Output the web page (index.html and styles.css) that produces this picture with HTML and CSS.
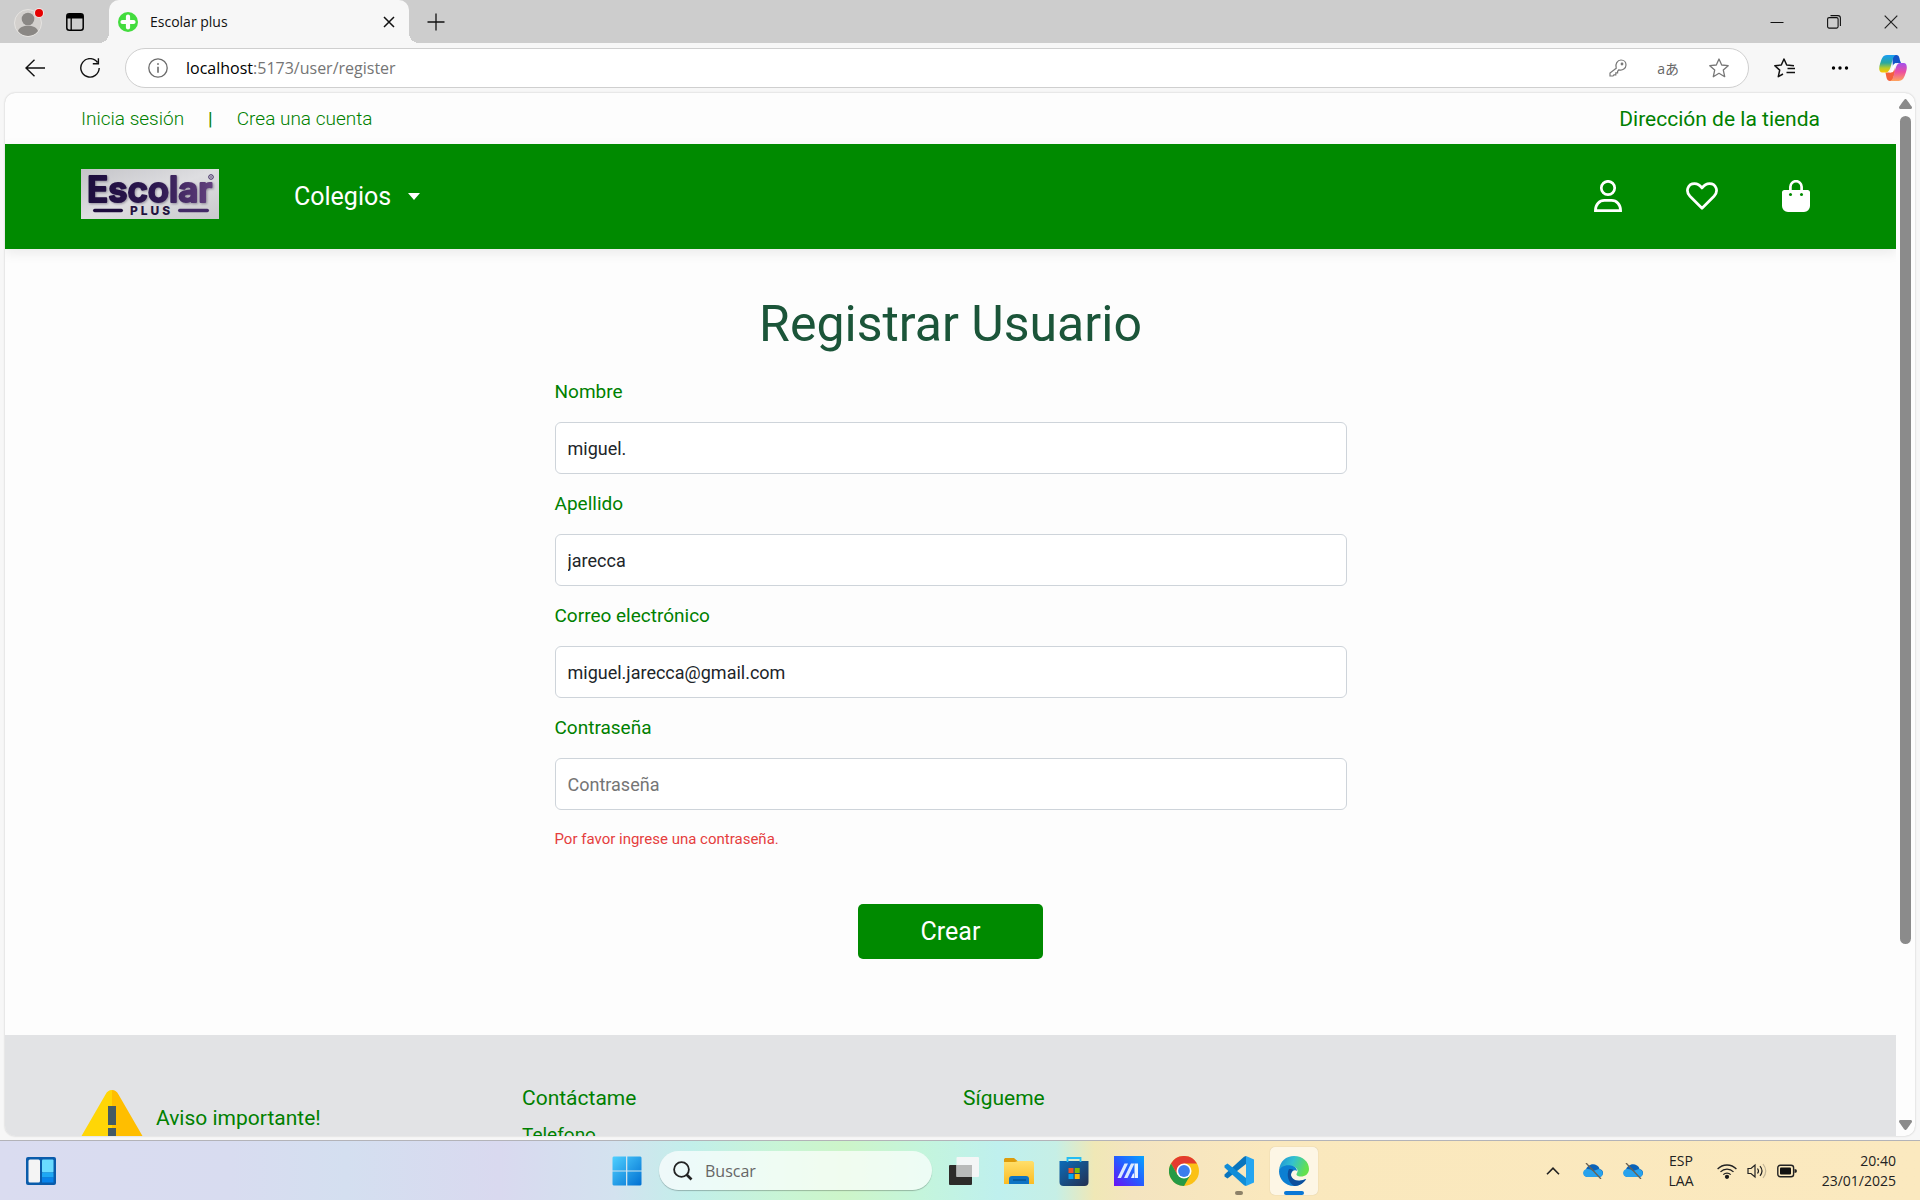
FILE: index.html
```html
<!DOCTYPE html>
<html lang="es">
<head>
<meta charset="utf-8">
<meta name="viewport" content="width=device-width, initial-scale=1">
<title>Escolar plus</title>
<link rel="stylesheet" href="styles.css">
</head>
<body>
<div class="browser">
  <div class="tabstrip">
    <div class="tab-tools">
      <button class="icon-btn" aria-label="Perfil">
        <svg width="32" height="32" viewBox="0 0 32 32"><circle cx="15" cy="17" r="13.5" fill="#d3d0cd" stroke="#e6e4e1"/><circle cx="15" cy="13" r="6.3" fill="#8a8784"/><path d="M5 25c2-7 18-7 20 0-5 6.500-15 6.500-20 0z" fill="#8a8784"/><circle cx="26" cy="7" r="5" fill="#f4e4e4"/><circle cx="26" cy="7" r="4" fill="#e60000"/></svg>
      </button>
      <button class="icon-btn" aria-label="Menú de pestañas">
        <svg width="18" height="18" viewBox="0 0 18 18"><rect x=".8" y=".8" width="16.400" height="16.400" rx="2.500" fill="none" stroke="#000" stroke-width="1.500"/><path d="M1 3a2 2 0 0 1 2-2h12a2 2 0 0 1 2 2v2.500H1z"/><path d="M5.200 5v12" stroke="#000" stroke-width="1.300"/></svg>
      </button>
    </div>
    <div class="tab">
      <svg width="20" height="20" viewBox="0 0 20 20"><circle cx="10" cy="10" r="10" fill="#43dc3e"/><path d="M10 4.500v11M4.500 10h11" stroke="#fff" stroke-width="4.200" stroke-linecap="round"/></svg>
      <span class="tab-title">Escolar plus</span>
      <button class="icon-btn" aria-label="Cerrar pestaña"><svg width="12" height="12" viewBox="0 0 12 12"><path d="M1 1l10 10M11 1L1 11" stroke="#111" stroke-width="1.500"/></svg></button>
    </div>
    <button class="icon-btn new-tab" aria-label="Nueva pestaña"><svg width="18" height="18" viewBox="0 0 18 18"><path d="M9 .5v17M.5 9h17" stroke="#111" stroke-width="1.300"/></svg></button>
    <div class="window-controls">
      <button class="icon-btn" aria-label="Minimizar"><svg width="14" height="14" viewBox="0 0 14 14"><path d="M.5 7.500h13" stroke="#111"/></svg></button>
      <button class="icon-btn" aria-label="Restaurar"><svg width="14" height="14" viewBox="0 0 14 14" fill="none" stroke="#111" stroke-width="1.100"><rect x=".6" y="2.600" width="10.500" height="10.500" rx="1.500"/><path d="M3.500 .6h7.500a2.400 2.400 0 0 1 2.400 2.400v8"/></svg></button>
      <button class="icon-btn" aria-label="Cerrar"><svg width="14" height="14" viewBox="0 0 14 14"><path d="M.7 .7l12.600 12.600M13.300 .7L.7 13.300" stroke="#222" stroke-width="1.200"/></svg></button>
    </div>
  </div>

  <div class="toolbar">
    <button class="icon-btn" aria-label="Atrás"><svg width="20" height="18" viewBox="0 0 20 18" fill="none" stroke="#111" stroke-width="1.400"><path d="M20 9H1M9.500 .7L1 9l8.500 8.300"/></svg></button>
    <button class="icon-btn" aria-label="Actualizar"><svg width="20" height="20" viewBox="0 0 20 20" fill="none" stroke="#111" stroke-width="1.400"><path d="M17.500 4.500A9.200 9.200 0 1 0 19.200 10M18.400 .3v5.400h-5.600"/></svg></button>
    <div class="address">
      <svg width="20" height="20" viewBox="0 0 20 20" fill="none" stroke="#6b6b6b" stroke-width="1.300"><circle cx="10" cy="10" r="9.200"/><path d="M10 8.700v6" stroke-width="1.600"/><circle cx="10" cy="6" r=".6" fill="#6b6b6b" stroke-width=".8"/></svg>
      <span class="url"><span class="host">localhost</span>:5173/user/register</span>
      <svg width="18" height="18" viewBox="0 0 18 18" fill="none" stroke="#777" stroke-width="1.200"><path d="M7.200 9.200C5.800 5.200 8.500 1 12 1c3 0 5 2.300 5 5 0 3.500-3.500 5.800-7 4.800L8.600 12.300v1.500H6.800v2H4.900L4 17H1v-3z"/><circle cx="13" cy="5" r=".8" fill="#777"/></svg>
      <span class="translate">aあ</span>
      <svg width="20" height="20" viewBox="0 0 20 20" fill="none" stroke="#777" stroke-width="1.300" stroke-linejoin="round"><path d="M10 1l2.700 6 6.500.700-4.900 4.400 1.400 6.600L10 15.300l-5.700 3.400 1.400-6.600L.8 7.700 7.300 7z"/></svg>
    </div>
    <button class="icon-btn" aria-label="Favoritos"><svg width="22" height="20" viewBox="0 0 22 20" fill="none" stroke="#111" stroke-width="1.500" stroke-linejoin="round"><path d="M20 7.700L12.700 7 10 1 7.300 7 .8 7.700l4.900 4.400-1.400 6.600L9 16M13.500 10.500H21M12.500 14.500H21"/></svg></button>
    <button class="icon-btn" aria-label="Configuración y más"><svg width="18" height="6" viewBox="0 0 18 6"><circle cx="2.500" cy="3" r="1.700"/><circle cx="9" cy="3" r="1.700"/><circle cx="15.500" cy="3" r="1.700"/></svg></button>
    <button class="icon-btn" aria-label="Copilot">
      <svg width="28" height="26" viewBox="0 0 28 26">
        <defs>
          <linearGradient id="cpA" x1="0" y1="0" x2="0" y2="1"><stop offset="0" stop-color="#1a9df5"/><stop offset=".45" stop-color="#28a8a0"/><stop offset=".75" stop-color="#b8cc28"/><stop offset="1" stop-color="#ffc400"/></linearGradient>
          <linearGradient id="cpB" x1="0" y1="0" x2="0" y2="1"><stop offset="0" stop-color="#a250ee"/><stop offset=".5" stop-color="#ec4fa0"/><stop offset="1" stop-color="#ffa45c"/></linearGradient>
        </defs>
        <path d="M13 0h4.500c2.500 0 3 3 3.500 5.500l1 2.500h-4c-2 0-3 1-4 4z" fill="#1454c8"/>
        <path d="M6.500 17.500h5L15 12l1 5-2 7c-.5 1.500-1.500 2-3 2-3.500 0-3.500-4-4.500-8.500z" fill="#f4603c"/>
        <path d="M8 0h9c-3 1-3.500 5-4.500 9S10 17.500 7 17.500H3.500C-.8 17.500 0 12 1 9 2.500 4 3.500 0 8 0z" fill="url(#cpA)"/>
        <path d="M21 8h3.500c4.300 0 3.500 6 2.500 9-1.500 5-3 9-7.500 9H11c3-1 3.500-5 4.500-9S18 8 21 8z" fill="url(#cpB)"/>
        <path d="M14.500 9.500q1-1.500 3-1.500-1.500 2-2.500 7-.5 2.500-3 2.500H10q1.500-.5 2.500-3z" fill="#fff"/>
      </svg>
    </button>
  </div>

  <div class="viewport">
    <div class="page">
      <div class="topbar">
        <nav class="account"><a href="#login">Inicia sesión</a><span class="divider">|</span><a href="#register">Crea una cuenta</a></nav>
        <a class="store" href="#tienda">Dirección de la tienda</a>
      </div>
      <header class="navbar">
        <a href="#inicio" class="logo" aria-label="Escolar Plus">
          <svg width="138" height="50" viewBox="0 0 138 50">
            <defs>
              <linearGradient id="lgBg" x1="0" y1="0" x2="1" y2="1"><stop offset="0" stop-color="#c4c4c8"/><stop offset=".5" stop-color="#dedee1"/><stop offset="1" stop-color="#c9c9cc"/></linearGradient>
              <linearGradient id="lgInk" gradientUnits="userSpaceOnUse" x1="0" y1="0" x2="138" y2="0"><stop offset="0" stop-color="#1c0c3c"/><stop offset=".55" stop-color="#2d1850"/><stop offset="1" stop-color="#6a4684"/></linearGradient>
            </defs>
            <rect width="138" height="50" fill="url(#lgBg)"/>
            <text class="logo-name" x="6" y="33" fill="url(#lgInk)" stroke="url(#lgInk)">Escolar</text>
            <text class="logo-plus" x="49" y="46">PLUS</text>
            <rect x="97" y="39.800" width="31" height="3.400" rx="1.700" fill="#432a66"/>
            <rect x="12" y="39.800" width="30" height="3.400" rx="1.700" fill="#1c0c3c"/>
            <circle cx="130" cy="8" r="2.300" fill="none" stroke="#3b2560"/><circle cx="130" cy="8" r=".8" fill="#3b2560"/>
          </svg>
        </a>
        <button class="menu-btn">Colegios<svg width="12" height="7" viewBox="0 0 12 7"><path d="M0 0h12L6 7z" fill="#fff"/></svg></button>
        <nav class="nav-icons">
          <a href="#perfil" aria-label="Mi cuenta"><svg width="32" height="32" viewBox="0 0 32 32" fill="none" stroke="#fff" stroke-width="2.700"><circle cx="16" cy="8" r="6.700"/><path d="M3.400 30.600h25.200c0-6-4-10.200-9-10.200h-7.200c-5 0-9 4.200-9 10.200z"/></svg></a>
          <a href="#favoritos" aria-label="Favoritos"><svg width="32" height="32" viewBox="0 0 32 32" fill="none" stroke="#fff" stroke-width="2.700" stroke-linejoin="round"><path d="M16 28.300L4 16.300C-1 11 2 3.600 8.500 3.600c3.500 0 5.500 1.600 7.500 4.400 2-2.800 4-4.400 7.500-4.400C30 3.600 33 11 28 16.300z"/></svg></a>
          <a href="#carrito" aria-label="Carrito"><svg width="32" height="32" viewBox="0 0 32 32"><path d="M10.400 12V6.800a5.600 5.600 0 0 1 11.200 0V12" fill="none" stroke="#fff" stroke-width="2.700"/><path d="M4.500 10h23A2.500 2.500 0 0 1 30 12.500V26a6 6 0 0 1-6 6H8a6 6 0 0 1-6-6V12.500A2.500 2.500 0 0 1 4.500 10z" fill="#fff"/><circle cx="10.500" cy="14.500" r="1.500" fill="#008a00"/><circle cx="21.500" cy="14.500" r="1.500" fill="#008a00"/></svg></a>
        </nav>
      </header>
      <main class="main">
        <h1>Registrar Usuario</h1>
        <form class="form">
          <label for="nombre">Nombre</label>
          <input id="nombre" type="text" value="miguel.">
          <label for="apellido">Apellido</label>
          <input id="apellido" type="text" value="jarecca">
          <label for="correo">Correo electrónico</label>
          <input id="correo" type="email" value="miguel.jarecca@gmail.com">
          <label for="clave">Contraseña</label>
          <input id="clave" type="password" placeholder="Contraseña" aria-describedby="clave-error">
          <p class="error" id="clave-error">Por favor ingrese una contraseña.</p>
          <button class="submit" type="button">Crear</button>
        </form>
      </main>
      <footer class="footer">
        <section class="notice">
          <svg width="62" height="56" viewBox="0 0 62 56"><path d="M31 0c-3 0-5 1.500-6.500 4.500L.5 46C-2 51 1 56 5 56h26z" fill="#ffd606"/><path d="M31 0c3 0 5 1.500 6.500 4.500l24 41.500c2.500 5-.5 10-4.500 10H31z" fill="#ffbe00"/><path d="M27 16h8v19h-8zM27 38h8v9h-8z" fill="#455a64"/></svg>
          <h2>Aviso importante!</h2>
        </section>
        <section><h2>Contáctame</h2><p>Telefono</p></section>
        <section><h2>Sígueme</h2></section>
      </footer>
    </div>
    <div class="scrollbar">
      <svg width="13" height="10" viewBox="0 0 13 10"><path d="M6.500 0C7.500 0 8 1 13 8c0 1.500-.5 2-1.500 2h-10C.5 10 0 9.500 0 8 5 1 5.500 0 6.500 0z" fill="#8b8b8b"/></svg>
      <div class="track"><div class="thumb"></div></div>
      <svg width="13" height="10" viewBox="0 0 13 10"><path d="M6.500 10C7.500 10 8 9 13 2c0-1.500-.5-2-1.500-2h-10C.5 0 0 .5 0 2c5 7 5.500 8 6.500 8z" fill="#8b8b8b"/></svg>
    </div>
  </div>
</div>

<div class="taskbar">
  <button class="icon-btn widgets" aria-label="Widgets"><svg width="30" height="28" viewBox="0 0 30 28"><rect width="30" height="28" rx="2" fill="#0a5cab"/><rect x="2.500" y="2.500" width="11.500" height="23" rx="1.500" fill="#f4f4f4"/><rect x="16" y="2.500" width="11.500" height="13" rx="1" fill="#69dbff"/><rect x="16" y="15.500" width="11.500" height="5" fill="#1ea8f4"/><rect x="16" y="20.500" width="11.500" height="5" fill="#0883ea"/></svg></button>
  <div class="dock">
    <button class="app" aria-label="Inicio"><svg width="30" height="30" viewBox="0 0 30 30"><defs><linearGradient id="win" x1="0" y1="0" x2="1" y2="1"><stop offset="0" stop-color="#4fd0ff"/><stop offset="1" stop-color="#0070d2"/></linearGradient></defs><path d="M1.500 .5H14v14H.5v-13zM15.300 .5h13.200l1 1v13H15.300zM.5 15.500H14v14H1.500l-1-1zM15.300 15.500h14.200v13l-1 1H15.300z" fill="url(#win)"/></svg></button>
    <label class="search"><svg width="20" height="20" viewBox="0 0 20 20" fill="none" stroke="#222"><circle cx="8.500" cy="8.500" r="7.400" stroke-width="1.800"/><path d="M13.500 13.500l5 5" stroke-width="2.600"/></svg><input type="text" placeholder="Buscar" aria-label="Buscar"></label>
    <button class="app" aria-label="Vista de tareas"><svg width="30" height="28" viewBox="0 0 30 28"><rect x="0" y="8" width="23" height="20" rx="1" fill="#2d2b29"/><rect x="7.500" y="0" width="22.500" height="20" rx="1" fill="#f4f6f6"/><path d="M7.500 8H23v12H7.500z" fill="#b9bab9"/></svg></button>
    <button class="app" aria-label="Explorador de archivos"><svg width="30" height="28" viewBox="0 0 30 28"><defs><linearGradient id="fold" x1="0" y1="0" x2="0" y2="1"><stop offset="0" stop-color="#ffdf6b"/><stop offset="1" stop-color="#fcbc22"/></linearGradient></defs><path d="M0 10V2.500C0 1.500 1 1 2 1h8l3.500 3H28v6z" fill="#dd9c0c"/><path d="M0 5h11l3-1h14.500L30 5.500V27H0z" fill="url(#fold)"/><path d="M5 27v-5q0-3 3-3h14q3 0 3 3v5z" fill="#0e74c4"/><path d="M9 23h13" stroke="#06508c" stroke-width="1.300"/></svg></button>
    <button class="app" aria-label="Microsoft Store"><svg width="30" height="30" viewBox="0 0 30 30"><defs><linearGradient id="store" x1="0" y1="0" x2="1" y2="1"><stop offset="0" stop-color="#0b6cba"/><stop offset="1" stop-color="#243050"/></linearGradient></defs><path d="M.5 5h29v21q0 4-4 4h-21q-4 0-4-4z" fill="url(#store)"/><path d="M8.500 6V2h13v4" fill="none" stroke="#24bdf3" stroke-width="1.800"/><path d="M9.500 12h5v5h-5z" fill="#f35325"/><path d="M15.700 12h5v5h-5z" fill="#81bc06"/><path d="M9.500 18h5v5h-5z" fill="#05a6f0"/><path d="M15.700 18h5v5h-5z" fill="#ffba08"/></svg></button>
    <button class="app" aria-label="MyASUS"><svg width="30" height="30" viewBox="0 0 30 30"><defs><linearGradient id="asus" x1="1" y1="0" x2="0" y2="1"><stop offset="0" stop-color="#06a4ff"/><stop offset=".5" stop-color="#265cff"/><stop offset="1" stop-color="#6a10f4"/></linearGradient></defs><path d="M0 0h30v30H0z" fill="url(#asus)"/><path d="M3.500 22l7-14.500h3.500L7 22zM10 22l7-14.500h3.500L13.500 22z" fill="#dbe9ff"/><path d="M20.500 7.500H24V22h-3.500zM17 22l2-4.500h1V22z" fill="#eaf4ff"/></svg></button>
    <button class="app" aria-label="Chrome"><svg width="30" height="30" viewBox="0 0 30 30"><circle cx="15" cy="15" r="15" fill="#fbc116"/><path d="M2 7.500A15 15 0 0 1 28 7.500H15L8.500 18.700z" fill="#e33b2e"/><path d="M2 7.500A15 15 0 0 0 15 30l6.500-11.300H8.500z" fill="#259a46"/><circle cx="15" cy="15" r="7.500" fill="#fff"/><circle cx="15" cy="15" r="5.900" fill="#3b7ded"/></svg></button>
    <button class="app running" aria-label="Visual Studio Code"><svg width="30" height="30" viewBox="0 0 30 30"><path d="M22 8L3.500 22.500.5 20.500v-2L20 .8 22 0z" fill="#0874bd"/><path d="M22 22L3.500 7.500l-3 2v2L20 29.200l2 .8z" fill="#118dd8"/><path d="M22 0L30 3.500v23L22 30z" fill="#25a5f0"/></svg></button>
    <button class="app active" aria-label="Microsoft Edge"><svg width="30" height="30" viewBox="0 0 30 30"><defs><linearGradient id="edA" x1="0" y1="0" x2="1" y2=".3"><stop offset="0" stop-color="#1c8fd8"/><stop offset=".5" stop-color="#34c1cf"/><stop offset="1" stop-color="#63e14e"/></linearGradient></defs><path d="M0 15C.5 5 7.500 0 15 0c9 0 15 6 15 13 0 5-4 7.500-8 7.500-3.500 0-5.500-1.500-4-3.500 2-3-1-7-6-7C6 10 1 13 0 15z" fill="url(#edA)"/><path d="M0 15c1-4 6-6.500 12-5.500 4 .7 6 3 6 5.500-2-2-6 0-6 4 0 5 5 8 15 4-3 4.700-7 7-12 7C6 30 0 23 0 15z" fill="#0c7fd2"/><path d="M10 13c-3 6-.5 14 5.500 17 5-.2 9-2.800 11.800-7C18 27 12 23 12 18.500c0-2 1-3.500 2.500-4.500-1-.8-3-1.200-4.500-1z" fill="#0d4f9c"/></svg></button>
  </div>
  <div class="tray">
    <svg width="14" height="8" viewBox="0 0 14 8"><path d="M1 7.200l6-6 6 6" fill="none" stroke="#222" stroke-width="1.600"/></svg>
    <svg class="cloud-a" width="20" height="16" viewBox="0 0 20 16"><path d="M4 14a4 4 0 0 1-1-7.500C4 3 9-.5 14 2.500c1.500.8 2.300 2 2.500 3.500C22 7 20.500 14 16 14z" fill="#0a62b9"/><path d="M4 14c-3.500 0-5-4-3-6.500C4 5 7 6 10 8l6-2c5 1 5 8 0 8z" fill="#28a2ec"/><path d="M3 0l15 16" stroke="#6b6252" stroke-width="1.300"/></svg>
    <svg class="cloud-b" width="20" height="16" viewBox="0 0 20 16"><path d="M4 14a4 4 0 0 1-1-7.500C4 3 9-.5 14 2.500c1.500.8 2.300 2 2.500 3.500C22 7 20.500 14 16 14z" fill="#0a62b9"/><path d="M4 14c-3.500 0-5-4-3-6.500C4 5 7 6 10 8l6-2c5 1 5 8 0 8z" fill="#28a2ec"/><path d="M3 0l15 16" stroke="#6b6252" stroke-width="1.300"/></svg>
    <div class="lang">ESP<br>LAA</div>
    <div class="status">
      <svg width="20" height="16" viewBox="0 0 20 16" fill="none" stroke="#222" stroke-width="1.300"><path d="M.6 6a13 13 0 0 1 18.800 0M3.500 8.900a9 9 0 0 1 13 0M6.300 11.600a5.200 5.200 0 0 1 7.400 0"/><circle cx="10" cy="13.800" r="1.500" fill="#111"/></svg>
      <svg width="20" height="16" viewBox="0 0 20 16" fill="none" stroke="#222" stroke-width="1.200"><path d="M1 5.500h3L8 2v12l-4-3.500H1zM10.500 5.500q2 2.500 0 5M13 3.200q4 4.800 0 9.600"/><path d="M16 1q5.500 7 0 14" stroke="#c3b698"/></svg>
      <svg width="20" height="14" viewBox="0 0 20 14"><rect x=".8" y="1.300" width="15.800" height="11.400" rx="2.500" fill="none" stroke="#222" stroke-width="1.400"/><rect x="3" y="3.500" width="11" height="7" rx="1" fill="#111"/><path d="M17.500 5q2.500 0 2.500 2t-2.500 2z" fill="#222"/></svg>
    </div>
    <div class="clock">20:40<br>23/01/2025</div>
  </div>
</div>
</body>
</html>
```

FILE: styles.css
```css
* { box-sizing: border-box; }

:root {
  --green: #008a00;
  --ink-green: #008000;
  --ui-font: "Open Sans", "Noto Sans", sans-serif;
}

body {
  margin: 0;
  height: 100vh;
  display: flex;
  flex-direction: column;
  overflow: hidden;
  background: #f7f7f7;
  font-family: Roboto, sans-serif;
}

a { color: inherit; text-decoration: none; }
svg { display: block; flex: none; }
button { font: inherit; border: 0; padding: 0; background: none; color: inherit; }

.icon-btn { display: flex; align-items: center; justify-content: center; flex: none; }

/* Browser window */
.browser {
  flex: 1;
  min-height: 0;
  display: flex;
  flex-direction: column;
  font-family: var(--ui-font);
}

.tabstrip {
  height: 43px;
  flex: none;
  display: flex;
  align-items: center;
  background: #cdcdcd;
}
.tab-tools {
  width: 109px;
  padding-left: 13px;
  display: flex;
  align-items: center;
  gap: 21px;
}
.tab {
  width: 300px;
  height: 43px;
  padding: 0 14px 0 9px;
  display: flex;
  align-items: center;
  gap: 12px;
  background: #f7f7f7;
  border-radius: 10px 10px 0 0;
  position: relative;
}
.tab::before,
.tab::after {
  content: "";
  position: absolute;
  bottom: 0;
  width: 10px;
  height: 10px;
}
.tab::before { left: -10px; background: radial-gradient(circle at 0 0, #cdcdcd 10px, #f7f7f7 10px); }
.tab::after { right: -10px; background: radial-gradient(circle at 100% 0, #cdcdcd 10px, #f7f7f7 10px); }
.tab-title { flex: 1; font-size: 14px; color: #111; }
.new-tab { margin-left: 18px; }
.window-controls { margin-left: auto; padding-right: 1px; display: flex; }
.window-controls .icon-btn { width: 57px; height: 43px; }

.toolbar {
  height: 49px;
  flex: none;
  display: flex;
  align-items: center;
  padding: 0 13px 0 25px;
  gap: 35px;
}
.address {
  flex: 1;
  height: 40px;
  margin-left: -10px;
  padding: 0 19px 0 22px;
  display: flex;
  align-items: center;
  gap: 30px;
  background: #fff;
  border: 1px solid #cfcfcf;
  border-radius: 20px;
}
.url { flex: 1; margin-left: -12px; font-size: 16px; color: #757575; }
.host { color: #000; }
.translate { font-family: "Open Sans", "Noto Sans CJK JP", sans-serif; font-size: 14px; color: #666; }
.address + .icon-btn { margin-left: -10px; }
.toolbar .icon-btn:last-child { margin-left: -5px; }

/* Web page area */
.viewport {
  flex: 1;
  min-height: 0;
  margin: 1px 5px 4px;
  display: flex;
  overflow: hidden;
  background: #fdfdfd;
  border-radius: 10px;
  box-shadow: 0 0 2px #bdbdbd;
}
.page { flex: 1; min-width: 0; overflow: hidden; font-family: Roboto, sans-serif; }

.topbar {
  height: 51px;
  padding: 0 76px;
  display: flex;
  align-items: center;
  justify-content: space-between;
  color: var(--ink-green);
}
.account { display: flex; gap: 24px; font-size: 19px; font-weight: 300; }
.divider { font-weight: 400; }
.store { font-size: 21px; }

.navbar {
  height: 105px;
  padding: 0 84px 0 76px;
  display: flex;
  align-items: center;
  background: var(--green);
  color: #fff;
  box-shadow: 0 4px 12px rgba(0, 0, 0, .08);
}
.logo { padding-bottom: 6px; }
.logo-name {
  font-family: Inter, sans-serif;
  font-size: 35px;
  font-weight: 600;
  stroke-width: 2;
  stroke-linejoin: round;
  filter: drop-shadow(1px 1px 1px rgba(40, 30, 60, .4));
}
.logo-plus { font-family: Inter, sans-serif; font-size: 12px; font-weight: 800; letter-spacing: 3px; fill: #24133f; }
.menu-btn {
  margin-left: 75px;
  display: flex;
  align-items: center;
  gap: 17px;
  font-size: 25px;
}
.nav-icons { margin-left: auto; padding-bottom: 2px; display: flex; gap: 62px; }

.main {
  padding: 45px 0 76px;
  display: flex;
  flex-direction: column;
  align-items: center;
}
h1 { margin: 0; font-size: 50px; font-weight: 400; line-height: 60px; color: #1b5539; }
.form {
  width: 792px;
  max-width: 90%;
  margin-top: 24px;
  display: flex;
  flex-direction: column;
}
.form label { margin-bottom: 17px; font-size: 19px; line-height: 27px; color: var(--ink-green); }
.form input {
  width: 100%;
  height: 52px;
  margin-bottom: 16px;
  padding: 0 12px;
  font: 18px Roboto, sans-serif;
  color: #212529;
  background: #fff;
  border: 1px solid #ced4da;
  border-radius: 6px;
}
.form input::placeholder { color: #757575; }
.error { margin: 0; font-size: 15px; line-height: 26px; color: #e53e3e; }
.submit {
  align-self: center;
  width: 185px;
  height: 55px;
  margin-top: 52px;
  font-size: 25px;
  color: #fff;
  background: var(--green);
  border-radius: 5px;
}

.footer {
  display: grid;
  grid-template-columns: 441px 441px 1fr;
  padding: 48px 76px;
  background: #e2e3e5;
  color: var(--ink-green);
}
.footer h2 { margin: 0; font-size: 21px; font-weight: 400; line-height: 30px; }
.footer p { margin: 8px 0 0; font-size: 19px; line-height: 28px; }
.notice { display: flex; align-items: center; gap: 13px; padding-top: 4px; }

.scrollbar {
  width: 19px;
  padding: 6px 0;
  display: flex;
  flex-direction: column;
  align-items: center;
  gap: 7px;
}
.track { flex: 1; }
.thumb { width: 11px; height: 83%; background: #8b8b8b; border-radius: 6px; }

/* Taskbar */
.taskbar {
  height: 60px;
  flex: none;
  display: grid;
  grid-template-columns: 1fr auto 1fr;
  align-items: center;
  border-top: 1px solid #b3b3b8;
  background: linear-gradient(90deg, #dadcf0 0%, #d8dcf0 12%, #d4dff0 18%, #d9d9ef 26%, #d3e2ef 32%, #c2efea 36%, #c9f5d4 41%, #cdf5c9 44%, #c4f5dc 48%, #bff0ee 52%, #c6efe6 55%, #f0e8b6 57%, #f4e4c0 59%, #fae8bd 66%, #fbe9bf 100%);
  font-family: var(--ui-font);
  color: #222;
}
.widgets { justify-self: start; margin-left: 26px; }
.dock { display: flex; align-items: center; }
.app {
  width: 55px;
  height: 48px;
  display: flex;
  align-items: center;
  justify-content: center;
  position: relative;
}
.running::after,
.active::after {
  content: "";
  position: absolute;
  bottom: 0;
  width: 8px;
  height: 4px;
  border-radius: 2px;
  background: #8d8168;
}
.active::after { width: 20px; background: #0a78d6; }
.active::before {
  content: "";
  position: absolute;
  inset: 0 3px 0 4px;
  border-radius: 5px;
  background: rgba(255, 255, 255, .6);
  box-shadow: 0 0 1px rgba(0, 0, 0, .25);
}
.active svg { position: relative; }
.search {
  width: 273px;
  height: 39px;
  margin: 0 4px 0 5px;
  padding: 0 14px;
  display: flex;
  align-items: center;
  gap: 12px;
  border-radius: 20px;
  background: rgba(255, 255, 255, .7);
  box-shadow: 0 1px 1px rgba(0, 0, 0, .25);
}
.search input {
  width: 100%;
  min-width: 0;
  padding: 0;
  border: 0;
  background: none;
  font: 16px var(--ui-font);
}
.search input::placeholder { color: #666; }

.tray {
  justify-self: end;
  margin-right: 24px;
  display: flex;
  align-items: center;
  font-size: 14px;
  line-height: 20px;
}
.cloud-a { margin-left: 23px; }
.cloud-b { margin-left: 20px; }
.lang { width: 32px; margin: 0 20px 0 22px; text-align: center; }
.status { display: flex; align-items: center; gap: 10px; }
.clock { width: 78px; margin-left: 21px; text-align: right; }
```
